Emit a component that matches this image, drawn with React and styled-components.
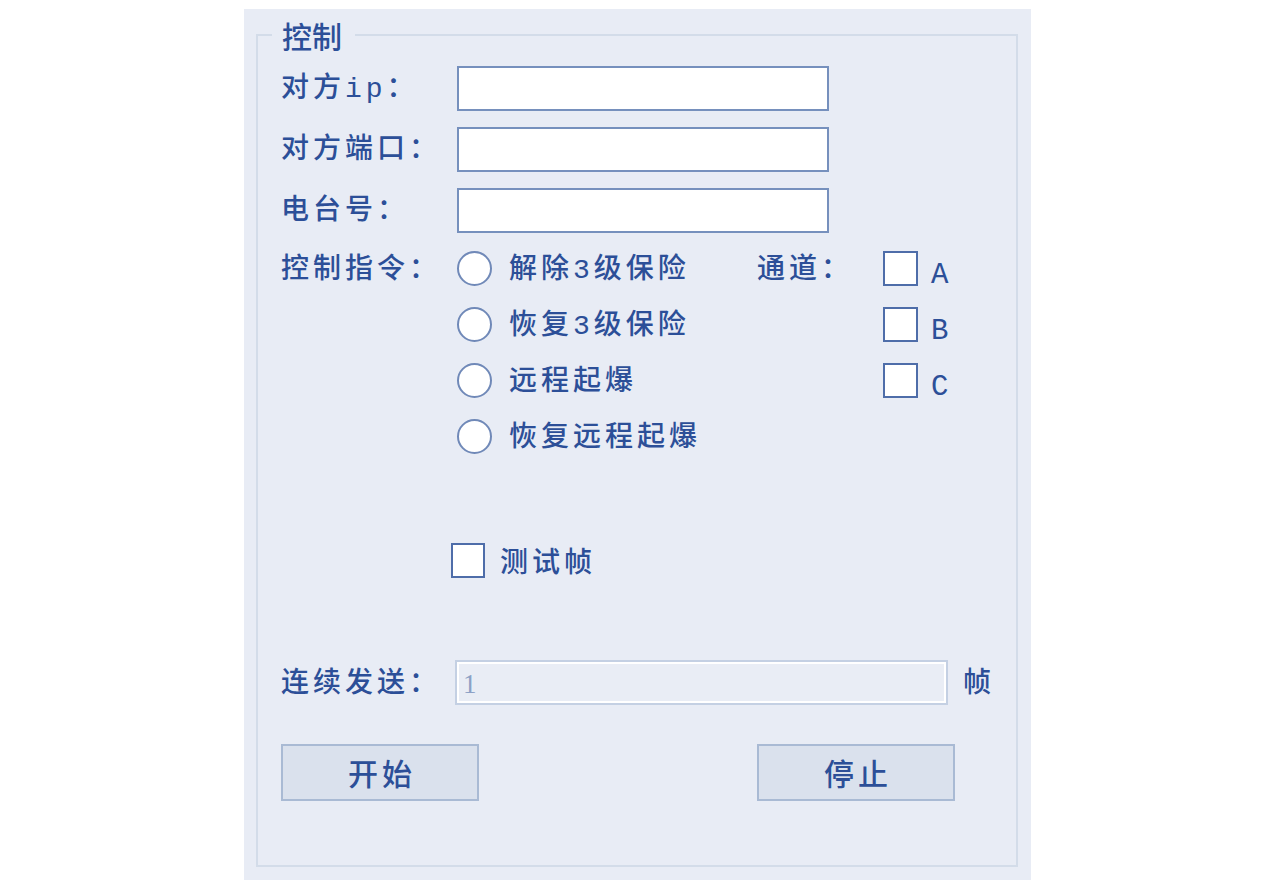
import React from "react";
import styled, { createGlobalStyle } from "styled-components";

const Global = createGlobalStyle`
  html, body { margin: 0; padding: 0; background: #ffffff; overflow: hidden; }
  * { box-sizing: border-box; }
`;

const FONT = `"Liberation Mono", "Noto Sans CJK SC", monospace`;
const TEXT = "#2c4f98";

const Panel = styled.div`
  width: 787px;
  height: 871px;
  margin: 9px 0 0 244px;
  padding: 12px 13px 13px 12px;
  background: #e8ecf5;
  display: flex;
  flex-direction: column;
  font-family: ${FONT};
  color: ${TEXT};
`;

const Group = styled.fieldset`
  flex: 1;
  margin: 0;
  min-width: 0;
  border: 2px solid #d3dce9;
  padding: 17px 0 0 23px;
  display: flex;
  flex-direction: column;
`;

const Legend = styled.legend`
  margin-left: -9px;
  padding: 0 13px 0 10px;
  font-family: "Noto Sans CJK SC", sans-serif;
  font-weight: 500;
  font-size: 30px;
  line-height: 28px;
  color: ${TEXT};
`;

const Label = styled.span`
  font-size: 28px;
  font-weight: 500;
  line-height: 34px;
  padding-top: ${(p) => p.$dy || 0}px;
  margin-bottom: ${(p) => -(p.$dy || 0)}px;
  letter-spacing: 4px;
  white-space: nowrap;
`;

const FieldGrid = styled.div`
  display: grid;
  grid-template-columns: 176px 372px;
  grid-auto-rows: 45px;
  row-gap: 16px;
  align-items: center;
`;

const TextInput = styled.input`
  width: 100%;
  height: 100%;
  border: 2px solid #7690bd;
  background: #ffffff;
  outline: none;
  padding: 0 6px;
  font: inherit;
`;

const CommandGrid = styled.div`
  margin-top: 7px;
  display: grid;
  grid-template-columns: 176px 300px 126px auto;
  grid-auto-rows: 56px;
  align-items: center;
`;

const Option = styled.label`
  display: flex;
  align-items: center;
  gap: ${(p) => p.$gap || 17}px;
  grid-column: ${(p) => p.$col};
  grid-row: ${(p) => p.$row};
`;

const Radio = styled.span`
  width: 35px;
  height: 35px;
  border-radius: 50%;
  border: 2px solid #7089b8;
  background: #ffffff;
  flex: none;
`;

const Check = styled.span`
  width: ${(p) => p.$w || 35}px;
  height: 35px;
  border: 2px solid #4e6da9;
  background: #ffffff;
  flex: none;
`;

const Letter = styled.span`
  font-family: "Liberation Mono", monospace;
  font-size: 29px;
  line-height: 34px;
  padding-top: 8px;
  margin-bottom: -8px;
`;

const Cell = styled.div`
  grid-column: ${(p) => p.$col};
  grid-row: ${(p) => p.$row};
  display: flex;
`;

const TestRow = styled.div`
  margin-top: 79px;
  padding-left: 170px;
`;

const RepeatRow = styled.div`
  margin-top: 82px;
  display: flex;
  align-items: center;
`;

const RepeatLabel = styled(Label)`
  width: 174px;
`;

const DisabledInput = styled.div`
  width: 493px;
  height: 45px;
  border: 2px solid #c4d0e3;
  box-shadow: inset 0 0 0 2px #ffffff;
  background: #e9edf5;
  display: flex;
  align-items: center;
  padding: 3px 0 0 6px;
  font-family: "Liberation Serif", serif;
  font-size: 27px;
  color: #8ca1c6;
`;

const Unit = styled(Label)`
  margin-left: 15px;
`;

const ButtonRow = styled.div`
  margin-top: 39px;
  width: 674px;
  display: flex;
  justify-content: space-between;
`;

const Button = styled.button`
  width: 198px;
  height: 57px;
  border: 2px solid #a9bad4;
  background: #dae1ed;
  font-family: "Noto Sans CJK SC", sans-serif;
  font-weight: 500;
  font-size: 30px;
  letter-spacing: 4px;
  padding: 0 0 2px 4px;
  color: ${TEXT};
`;

const radios = ["解除3级保险", "恢复3级保险", "远程起爆", "恢复远程起爆"];
const channels = ["A", "B", "C"];

export default function App() {
  return (
    <>
      <Global />
      <Panel>
        <Group>
          <Legend>控制</Legend>
          <FieldGrid>
            <Label $dy={1}>对方ip：</Label>
            <TextInput />
            <Label $dy={1}>对方端口：</Label>
            <TextInput />
            <Label $dy={1}>电台号：</Label>
            <TextInput />
          </FieldGrid>
          <CommandGrid>
            <Cell $col={1} $row={1}>
              <Label $dy={3}>控制指令：</Label>
            </Cell>
            {radios.map((r, i) => (
              <Option key={r} $col={2} $row={i + 1}>
                <Radio />
                <Label $dy={3}>{r}</Label>
              </Option>
            ))}
            <Cell $col={3} $row={1}>
              <Label $dy={3}>通道：</Label>
            </Cell>
            {channels.map((c, i) => (
              <Option key={c} $col={4} $row={i + 1} $gap={13}>
                <Check />
                <Letter>{c}</Letter>
              </Option>
            ))}
          </CommandGrid>
          <TestRow>
            <Option $gap={15}>
              <Check $w={34} />
              <Label $dy={4}>测试帧</Label>
            </Option>
          </TestRow>
          <RepeatRow>
            <RepeatLabel $dy={2}>连续发送：</RepeatLabel>
            <DisabledInput>1</DisabledInput>
            <Unit $dy={2}>帧</Unit>
          </RepeatRow>
          <ButtonRow>
            <Button>开始</Button>
            <Button>停止</Button>
          </ButtonRow>
        </Group>
      </Panel>
    </>
  );
}
